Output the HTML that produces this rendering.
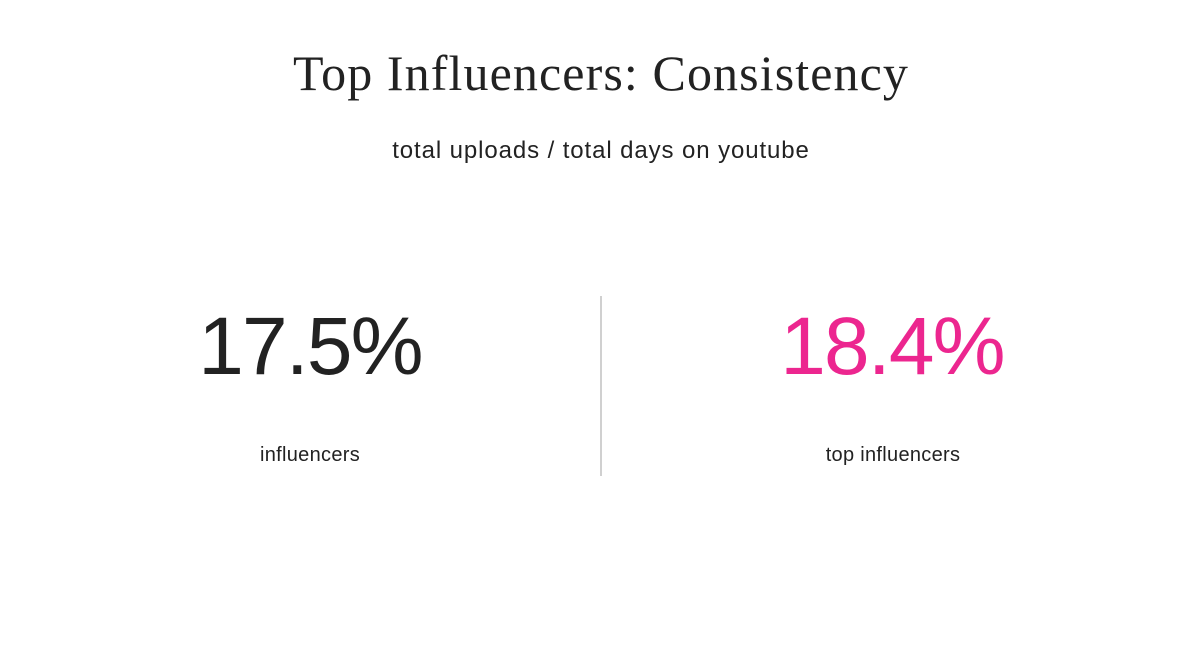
<!DOCTYPE html>
<html><head><style>
html,body{margin:0;padding:0;background:#fff;}
body{width:1202px;height:646px;position:relative;overflow:hidden;font-family:"Liberation Sans",sans-serif;color:#222;}
.t{position:absolute;top:44px;left:0;width:1202px;text-align:center;font-family:"Liberation Serif",serif;font-size:50px;letter-spacing:1.1px;color:#222;white-space:nowrap;}
.s{position:absolute;top:137px;left:0;width:1202px;text-align:center;font-size:24px;letter-spacing:0.9px;color:#222;}
.n{position:absolute;top:297px;width:400px;text-align:center;font-size:82px;letter-spacing:-1.8px;line-height:100px;}
.l{position:absolute;top:444px;width:400px;text-align:center;font-size:20px;letter-spacing:0.3px;}
.d{position:absolute;left:600px;top:296px;width:2px;height:180px;background:#d0d0d0;}
</style></head><body>
<div class="t">Top Influencers: Consistency</div>
<div class="s">total uploads / total days on youtube</div>
<div class="n" style="left:110px">17.5%</div>
<div class="n" style="left:692px;color:#ec268f">18.4%</div>
<div class="l" style="left:110px">influencers</div>
<div class="l" style="left:693px">top influencers</div>
<div class="d"></div>
</body></html>
